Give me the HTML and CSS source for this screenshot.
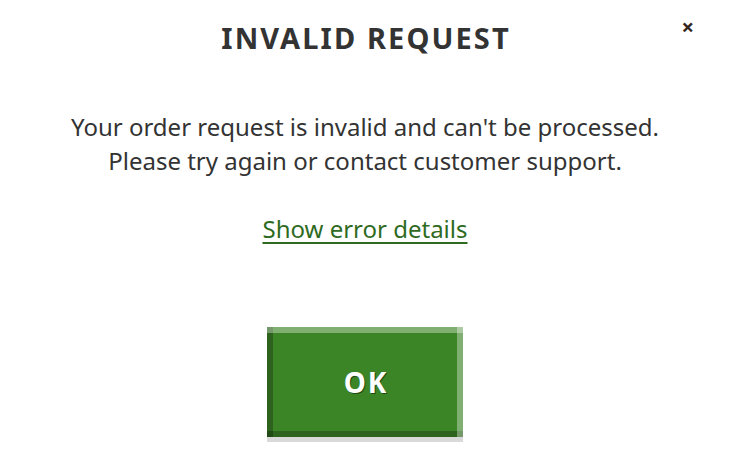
FILE: index.html
```html
<!DOCTYPE html>
<html lang="en">
<head>
    <meta charset="UTF-8">
    <title>Invalid Request</title>
    <link rel="stylesheet" href="styles.css">
</head>
<body>
    <div class="dialog">
        <button class="close" aria-label="Close">&times;</button>
        <h2 class="dialog-title">INVALID REQUEST</h2>
        <p class="dialog-text">Your order request is invalid and can't be processed.<br>Please try again or contact customer support.</p>
        <a class="details-link" href="#">Show error details</a>
        <div class="actions">
            <button class="ok-button">OK</button>
        </div>
    </div>
</body>
</html>
```

FILE: styles.css
```css
body {
    margin: 0;
    background-color: #fff;
    font-family: "Noto Sans", "Open Sans", sans-serif;
    color: #333;
}

.dialog {
    position: relative;
    width: 730px;
    height: 460px;
    text-align: center;
    padding-top: 18px;
    box-sizing: border-box;
}

/* Boton de cerrar */
.close {
    position: absolute;
    top: 11px;
    right: 36px;
    background: none;
    border: none;
    padding: 0;
    font-family: "Noto Sans", sans-serif;
    font-size: 22px;
    font-weight: bold;
    color: #33261d;
    cursor: pointer;
}

.dialog-title {
    margin: 0;
    font-size: 29px;
    font-weight: bold;
    letter-spacing: 2.1px;
    line-height: 40px;
    padding-left: 2px;
}

.dialog-text {
    margin: 52px 0 0;
    font-size: 24px;
    line-height: 34px;
}

.details-link {
    display: inline-block;
    margin-top: 34px;
    font-size: 24px;
    line-height: 34px;
    color: #2f6b1f;
    text-underline-offset: 4px;
    text-decoration-thickness: 2px;
}

.actions {
    margin-top: 81px;
}

.ok-button {
    width: 196px;
    height: 110px;
    background-color: #3c8527;
    border: none;
    box-shadow:
        inset 0 6px 0 rgba(255, 255, 255, 0.35),
        inset -6px 0 0 rgba(255, 255, 255, 0.35),
        inset 0 -6px 0 rgba(0, 0, 0, 0.25),
        inset 6px 0 0 rgba(0, 0, 0, 0.25),
        0 5px 0 #d9d9d9;
    color: #fff;
    font-family: "Noto Sans", sans-serif;
    font-size: 28px;
    font-weight: bold;
    letter-spacing: 2px;
    padding-left: 8px;
    text-shadow: 1px 1px 0 #1f4a14;
    cursor: pointer;
}
```
